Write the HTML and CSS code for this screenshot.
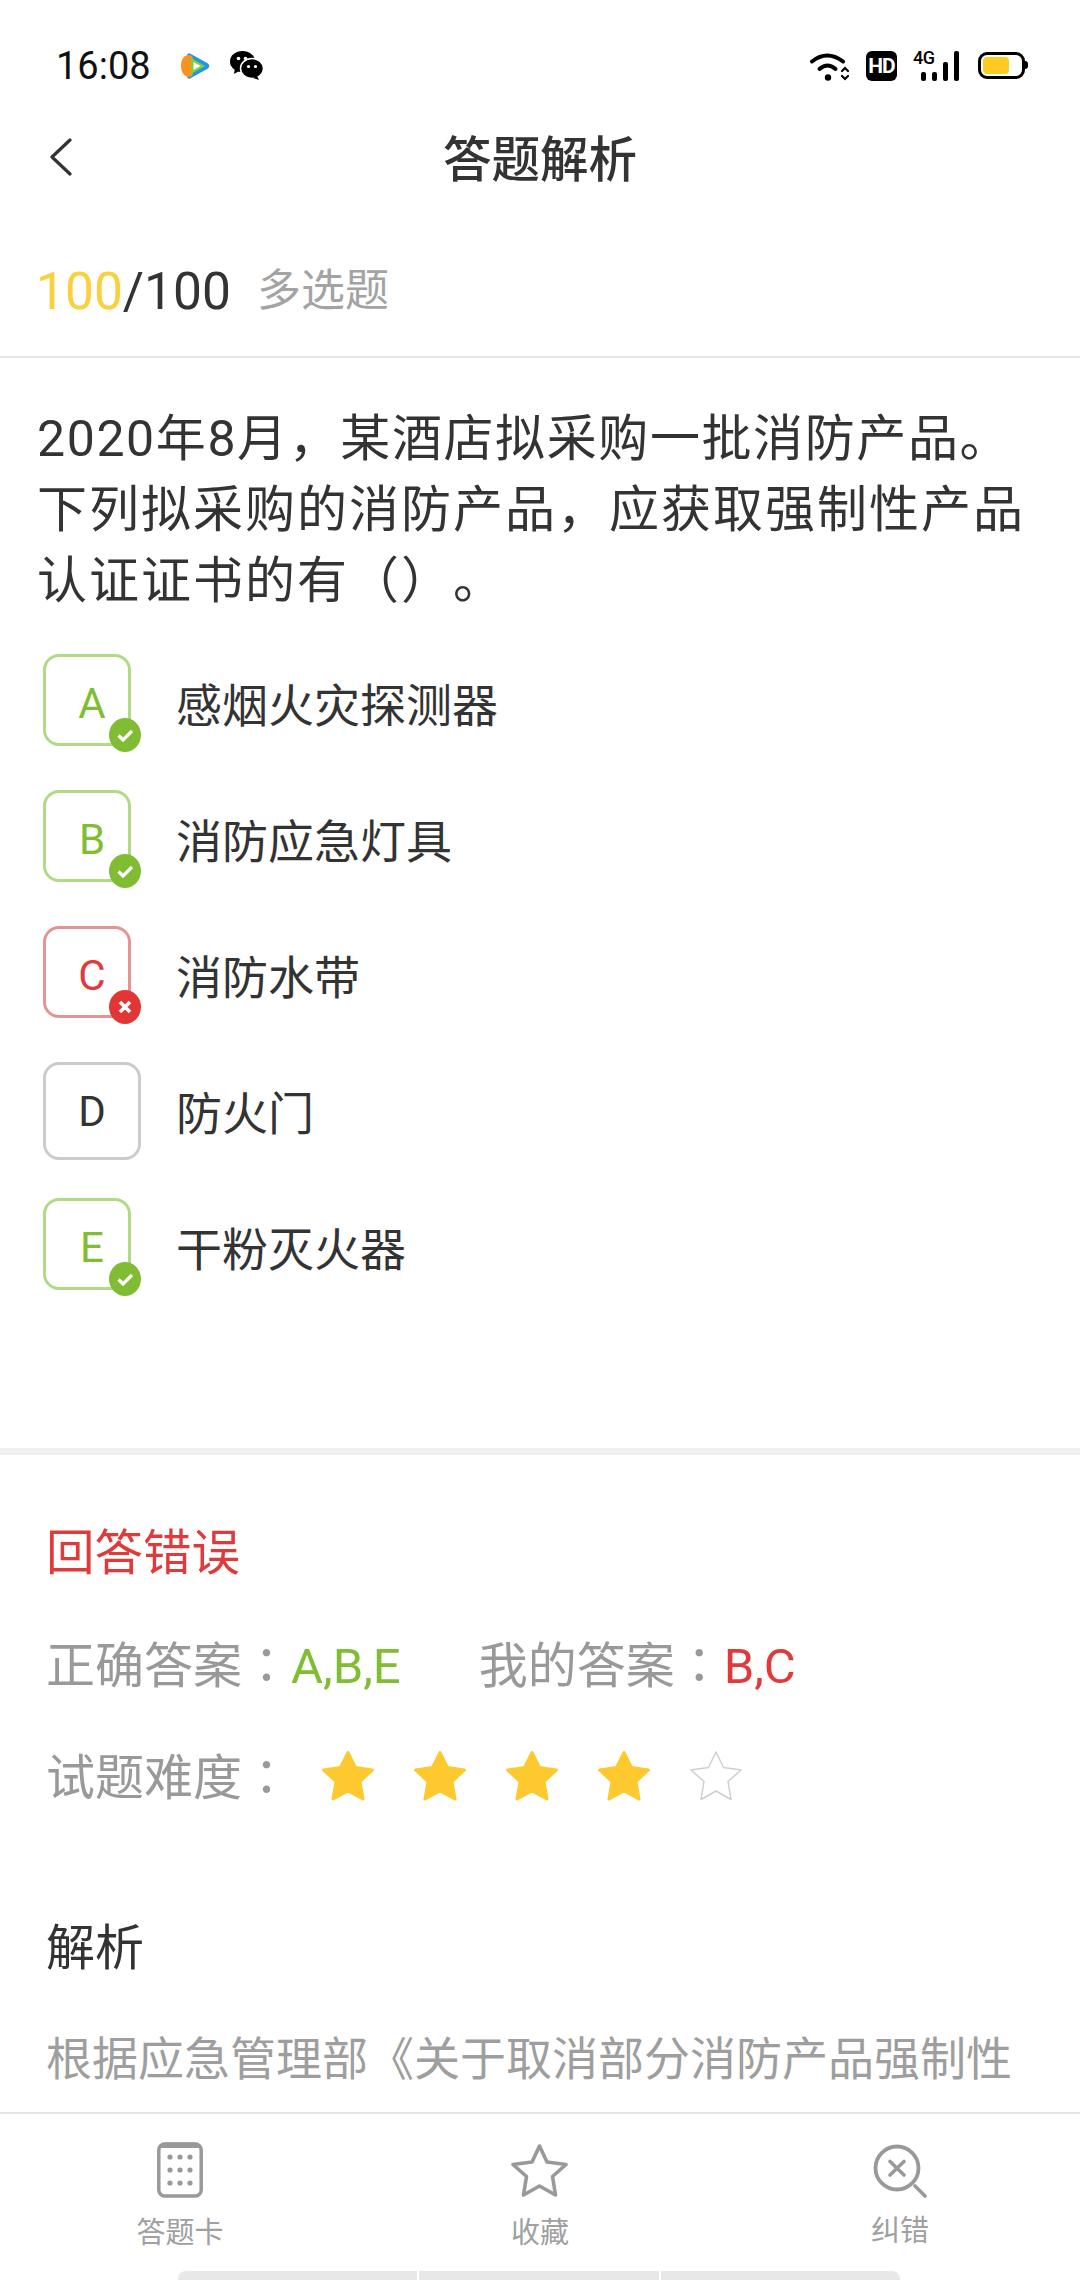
FILE: index.html
```html
<!DOCTYPE html>
<html lang="zh-CN">
<head>
<meta charset="utf-8">
<title>答题解析</title>
<link rel="stylesheet" href="styles.css">
</head>
<body>
<div class="page">
  <div class="status">
    <span class="time">16:08</span>
    <svg class="ic-video" viewBox="0 0 29 26"><path d="M9 0.500 L27 10.500 Q29.500 13 27 15.500 L9 25.500 Q6 26.500 6 23 L8 13 L6 3 Q6 -0.500 9 0.500Z" fill="#2196e8"/><path d="M7 2 Q0 3 0 13 Q0 22 7 24 Q12 24 12 20 L12 6 Q12 2 7 2Z" fill="#f7931e"/><path d="M10 5 L24 13 L10 21Z" fill="#7fd13b"/><path d="M12.500 9 L19.500 13 L12.500 17Z" fill="#fff"/></svg>
    <svg class="ic-wechat" viewBox="0 0 33 29"><ellipse cx="12.500" cy="10.500" rx="12.500" ry="10.500" fill="#000"/><path d="M5 17 L4 23 L11 19Z" fill="#000"/><ellipse cx="22" cy="17.500" rx="11.500" ry="10" fill="#000" stroke="#fff" stroke-width="1.500"/><path d="M27 25 L29 29 L23 27Z" fill="#000"/><circle cx="8.500" cy="7.500" r="1.800" fill="#fff"/><circle cx="15.500" cy="7.500" r="1.800" fill="#fff"/><circle cx="18.500" cy="15.500" r="1.600" fill="#fff"/><circle cx="25.500" cy="15.500" r="1.600" fill="#fff"/></svg>
    <span class="status-gap"></span>
    <svg class="ic-wifi" viewBox="0 0 39 29" fill="none" stroke="#000" stroke-width="4" stroke-linecap="round"><path d="M2 9.500 Q17 -2.500 33 9.500"/><path d="M9.500 17 Q17.500 10 25.500 17"/><circle cx="18" cy="25.500" r="3.200" fill="#000" stroke="none"/><path d="M32 19 L35 16 L38 19 M32 24 L35 27 L38 24" stroke-width="2.200"/></svg>
    <span class="ic-hd">HD</span>
    <span class="ic-signal">
      <span class="net">4G</span>
      <i class="bar b1"></i><i class="bar b2"></i><i class="bar b3"></i><i class="bar b4"></i>
    </span>
    <span class="battery"><i class="battery-level"></i></span>
  </div>

  <header class="topbar">
    <svg class="back" viewBox="0 0 24 38" fill="none" stroke="#333" stroke-width="3.200" stroke-linecap="round" stroke-linejoin="round"><path d="M21 2 L3 19 L21 36"/></svg>
    <h1 class="title">答题解析</h1>
  </header>

  <main class="content">
    <div class="score-row">
      <span class="score"><span class="score-got">100</span>/100</span>
      <span class="qtype">多选题</span>
    </div>

    <section class="question">
      <p class="qtext"><span class="qline qline-first">2020年8月，某酒店拟采购一批消防产品。</span><span class="qline">下列拟采购的消防产品，应获取强制性产品</span><span class="qline">认证证书的有（）。</span></p>
      <ul class="options">
        <li class="option">
          <span class="mark mark-right">A<svg class="badge" viewBox="0 0 32 34"><ellipse cx="16" cy="17" rx="16" ry="17" fill="#80bd33"/><path d="M9.500 17.500 L14 22 L23 13" fill="none" stroke="#fff" stroke-width="3.200"/></svg></span>
          <span class="opt-text">感烟火灾探测器</span>
        </li>
        <li class="option">
          <span class="mark mark-right">B<svg class="badge" viewBox="0 0 32 34"><ellipse cx="16" cy="17" rx="16" ry="17" fill="#80bd33"/><path d="M9.500 17.500 L14 22 L23 13" fill="none" stroke="#fff" stroke-width="3.200"/></svg></span>
          <span class="opt-text">消防应急灯具</span>
        </li>
        <li class="option">
          <span class="mark mark-wrong">C<svg class="badge" viewBox="0 0 32 34"><ellipse cx="16" cy="17" rx="16" ry="17" fill="#e23636"/><path d="M11 12 L21 22 M21 12 L11 22" fill="none" stroke="#fff" stroke-width="3.600"/></svg></span>
          <span class="opt-text">消防水带</span>
        </li>
        <li class="option">
          <span class="mark mark-plain">D</span>
          <span class="opt-text">防火门</span>
        </li>
        <li class="option">
          <span class="mark mark-right">E<svg class="badge" viewBox="0 0 32 34"><ellipse cx="16" cy="17" rx="16" ry="17" fill="#80bd33"/><path d="M9.500 17.500 L14 22 L23 13" fill="none" stroke="#fff" stroke-width="3.200"/></svg></span>
          <span class="opt-text">干粉灭火器</span>
        </li>
      </ul>
    </section>

    <section class="result">
      <div class="verdict">回答错误</div>
      <div class="answers">
        <span class="answer-item">正确答案<span class="colon" lang="zh-Hant">：</span><span class="ok">A,B,E</span></span>
        <span class="answer-item">我的答案<span class="colon" lang="zh-Hant">：</span><span class="bad">B,C</span></span>
      </div>
      <div class="difficulty">
        <span>试题难度<span class="colon" lang="zh-Hant">：</span></span>
        <span class="stars">
          <svg class="star" viewBox="0 0 54 52"><path d="M27 2.500 L34.500 17.500 L51.500 20 L39 31.500 L42 49 L27 41 L12 49 L15 31.500 L2.500 20 L19.500 17.500Z" fill="#fdc92f" stroke="#fdc92f" stroke-width="3" stroke-linejoin="round"/></svg>
          <svg class="star" viewBox="0 0 54 52"><path d="M27 2.500 L34.500 17.500 L51.500 20 L39 31.500 L42 49 L27 41 L12 49 L15 31.500 L2.500 20 L19.500 17.500Z" fill="#fdc92f" stroke="#fdc92f" stroke-width="3" stroke-linejoin="round"/></svg>
          <svg class="star" viewBox="0 0 54 52"><path d="M27 2.500 L34.500 17.500 L51.500 20 L39 31.500 L42 49 L27 41 L12 49 L15 31.500 L2.500 20 L19.500 17.500Z" fill="#fdc92f" stroke="#fdc92f" stroke-width="3" stroke-linejoin="round"/></svg>
          <svg class="star" viewBox="0 0 54 52"><path d="M27 2.500 L34.500 17.500 L51.500 20 L39 31.500 L42 49 L27 41 L12 49 L15 31.500 L2.500 20 L19.500 17.500Z" fill="#fdc92f" stroke="#fdc92f" stroke-width="3" stroke-linejoin="round"/></svg>
          <svg class="star" viewBox="0 0 54 52"><path d="M27 2 L34.500 17.500 L52 20 L39 31.500 L42 49.500 L27 41 L12 49.500 L15 31.500 L2 20 L19.500 17.500Z" fill="#fff" stroke="#cfcfcf" stroke-width="1.500" stroke-linejoin="round"/></svg>
        </span>
      </div>
      <h2 class="analysis-title">解析</h2>
      <p class="analysis">根据应急管理部《关于取消部分消防产品强制性认证的公告》，取消部分消防产品强制性认证。</p>
    </section>
  </main>

  <nav class="tabbar">
    <div class="tabs">
      <div class="tab">
        <svg class="tab-ic ic-card" viewBox="0 0 46 56"><rect x="1.800" y="2" width="42.400" height="52" rx="6" fill="none" stroke="#999" stroke-width="3.500"/><path d="M3 5 Q3 0.500 8 0.500 L38 0.500 Q43 0.500 43 5 L43 6 L3 6Z" fill="#999"/><g fill="#999"><circle cx="13" cy="15" r="2.600"/><circle cx="23" cy="15" r="2.600"/><circle cx="33" cy="15" r="2.600"/><circle cx="13" cy="28" r="2.600"/><circle cx="23" cy="28" r="2.600"/><circle cx="33" cy="28" r="2.600"/><circle cx="13" cy="41" r="2.600"/><circle cx="23" cy="41" r="2.600"/><circle cx="33" cy="41" r="2.600"/></g></svg>
        <span class="tab-label">答题卡</span>
      </div>
      <div class="tab">
        <svg class="tab-ic ic-fav" viewBox="0 0 57 56"><path d="M28.500 4 L36 20 L55 22.500 L41.500 34.500 L44.500 53 L28.500 44 L12.500 53 L15.500 34.500 L2 22.500 L21 20Z" fill="none" stroke="#999" stroke-width="3.600" stroke-linejoin="round"/></svg>
        <span class="tab-label">收藏</span>
      </div>
      <div class="tab">
        <svg class="tab-ic ic-fix" viewBox="0 0 54 56" fill="none" stroke="#999"><circle cx="24" cy="26" r="21.500" stroke-width="3.800"/><path d="M17 19.500 L31 33 M31 19.500 L17 33" stroke-width="3.600" stroke-linecap="round"/><path d="M42 44 L52 54" stroke-width="3.600" stroke-linecap="round"/></svg>
        <span class="tab-label tab-label-fix">纠错</span>
      </div>
    </div>
    <div class="home-strip"><i></i><i></i><i></i></div>
  </nav>
</div>
</body>
</html>
```
FILE: styles.css
```css
* { box-sizing: border-box; }
html, body { margin: 0; padding: 0; background: #fff; }
body { font-family: Roboto, "Noto Sans CJK SC", sans-serif; color: #333; text-spacing-trim: space-all; }
.page { width: 1080px; height: 2280px; display: flex; flex-direction: column; overflow: hidden; background: #fff; }

.status { height: 90px; padding: 50px 55px 0 56px; display: flex; align-items: flex-start; flex: none; }
.time { font-size: 38px; line-height: 32px; color: #111; }
.ic-video { width: 29px; height: 26px; margin: 3px 0 0 30px; }
.ic-wechat { width: 33px; height: 29px; margin: 1px 0 0 20px; }
.status-gap { flex: 1; }
.ic-wifi { width: 39px; height: 29px; margin-top: 2px; }
.ic-hd { width: 31px; height: 30px; margin: 1px 0 0 17px; background: #000; color: #fff; border-radius: 6px; font-size: 21px; font-weight: 700; line-height: 30px; text-align: center; letter-spacing: -1px; }
.ic-signal { position: relative; width: 44px; height: 30px; margin: 1px 0 0 18px; display: flex; align-items: flex-end; gap: 6px; padding-left: 6px; }
.net { position: absolute; left: -2px; top: -1px; font-size: 18px; font-weight: 500; line-height: 16px; letter-spacing: -0.500px; color: #000; }
.bar { width: 5px; background: #000; border-radius: 2px; display: block; }
.b1 { height: 9px; } .b2 { height: 9px; } .b3 { height: 19px; } .b4 { height: 30px; }
.battery { position: relative; width: 47px; height: 27px; margin: 2px 0 0 19px; border: 3.500px solid #000; border-radius: 9px; padding: 1.500px; display: block; }
.battery::after { content: ""; position: absolute; right: -6px; top: 6px; width: 3px; height: 8px; background: #000; border-radius: 0 3px 3px 0; }
.battery-level { display: block; width: 26px; height: 17px; background: #fdcb21; border-radius: 4px; }

.topbar { height: 136px; flex: none; display: flex; align-items: center; justify-content: center; position: relative; }
.back { position: absolute; left: 49px; top: 48px; width: 24px; height: 38px; }
.title { margin: 6px 0 0; font-size: 48.500px; font-weight: 500; line-height: 60px; color: #333; }

.content { flex: 1; min-height: 0; overflow: hidden; }
.score-row { height: 132px; padding: 0 36px; border-bottom: 2px solid #e6e6e6; display: flex; align-items: center; }
.score { font-size: 51.500px; color: #333; }
.score-got { color: #fccf3c; }
.qtype { font-size: 44px; line-height: 52px; color: #a3a3a3; margin-left: 26px; }

.question { height: 1097px; padding: 46px 37px 0; border-bottom: 7px solid #f0f0f0; }
.qtext { margin: 0; font-size: 50px; line-height: 71px; letter-spacing: 2px; color: #333; }
.qline { display: block; }
.qline-first { letter-spacing: 1.600px; }
.options { list-style: none; margin: 37px 0 0; padding: 0 0 0 6px; }
.option { display: flex; align-items: center; height: 98px; margin-bottom: 38px; }
.mark { position: relative; flex: none; width: 98px; height: 98px; display: flex; align-items: center; justify-content: center; font-size: 42px; }
.mark-plain { border: 3px solid #cbcbcb; border-radius: 16px; color: #333; }
.mark-right::before, .mark-wrong::before { content: ""; position: absolute; left: 0; top: 0; right: 10px; bottom: 6px; border-radius: 16px; border: 3px solid #b0da86; }
.mark-wrong::before { border-color: #e59494; }
.mark-right { color: #80bd33; }
.mark-wrong { color: #e03a3a; }
.badge { position: absolute; right: 0; bottom: 0; width: 32px; height: 34px; }
.opt-text { margin-left: 35px; margin-bottom: 2px; font-size: 46px; color: #333; }

.result { padding: 67px 46px 0; }
.verdict { font-size: 48.500px; line-height: 64px; color: #e03a3a; }
.colon { font-family: "Noto Sans CJK TC", sans-serif; }
.answers { margin-top: 44px; display: flex; gap: 78px; font-size: 49px; line-height: 64px; color: #999; }
.ok { color: #80bd33; }
.bad { color: #e03a3a; }
.difficulty { margin-top: 43px; display: flex; align-items: center; font-size: 49px; line-height: 64px; color: #999; }
.stars { display: flex; gap: 38px; margin-left: 30px; margin-bottom: 2px; }
.star { width: 54px; height: 52px; display: block; }
.analysis-title { margin: 106px 0 0; font-size: 49px; font-weight: 400; line-height: 64px; color: #333; }
.analysis { margin: 40px 0 0; font-size: 46px; line-height: 77px; color: #9e9e9e; }

.tabbar { flex: none; height: 168px; border-top: 2px solid #e6e6e6; background: #fff; display: flex; flex-direction: column; }
.tabs { flex: 1; display: flex; justify-content: space-around; padding: 28px 0 0; }
.tab { width: 360px; display: flex; flex-direction: column; align-items: center; }
.tab-ic { display: block; height: 56px; }
.ic-card { width: 46px; }
.ic-fav { width: 57px; margin-right: 2px; }
.ic-fix { width: 54px; }
.tab-label { margin-top: 18px; font-size: 29px; line-height: 34px; color: #a0a0a0; }
.tab-label-fix { margin-top: 16px; }
.home-strip { flex: none; height: 9px; margin: 0 180px 0 178px; display: flex; gap: 2px; }
.home-strip i { display: block; height: 9px; background: #e8e8e8; flex: 1; }
.home-strip i:first-child { border-radius: 8px 0 0 0; }
.home-strip i:last-child { border-radius: 0 8px 0 0; }
```
